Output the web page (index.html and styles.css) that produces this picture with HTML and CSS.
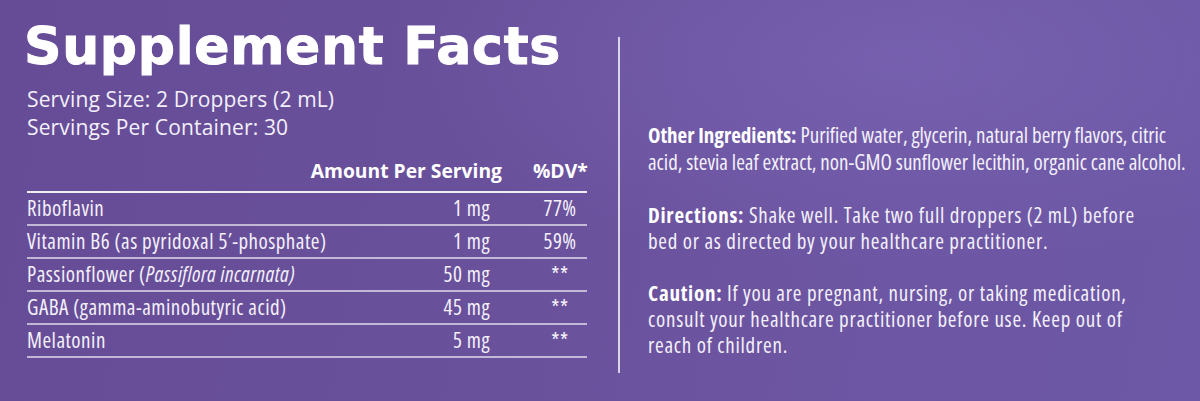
FILE: index.html
```html
<!DOCTYPE html>
<html lang="en">
<head>
<meta charset="utf-8">
<title>Supplement Facts</title>
<link rel="stylesheet" href="styles.css">
</head>
<body>
<main class="panel">
  <section class="facts">
    <h1 class="title">Supplement Facts</h1>
    <p class="serving">Serving Size: 2 Droppers (2 mL)</p>
    <p class="serving">Servings Per Container: 30</p>
    <div class="table">
      <div class="row head">
        <span class="name"></span>
        <span class="amt">Amount Per Serving</span>
        <span class="dv">%DV*</span>
      </div>
      <div class="row">
        <span class="name">Riboflavin</span>
        <span class="amt">1 mg</span>
        <span class="dv">77%</span>
      </div>
      <div class="row">
        <span class="name">Vitamin B6 (as pyridoxal 5′-phosphate)</span>
        <span class="amt">1 mg</span>
        <span class="dv">59%</span>
      </div>
      <div class="row">
        <span class="name">Passionflower (<i>Passiflora incarnata)</i></span>
        <span class="amt">50 mg</span>
        <span class="dv">**</span>
      </div>
      <div class="row">
        <span class="name">GABA (gamma-aminobutyric acid)</span>
        <span class="amt">45 mg</span>
        <span class="dv">**</span>
      </div>
      <div class="row">
        <span class="name">Melatonin</span>
        <span class="amt">5 mg</span>
        <span class="dv">**</span>
      </div>
    </div>
  </section>
  <div class="divider"></div>
  <section class="info">
    <p class="first"><b>Other Ingredients:</b> Purified water, glycerin, natural berry flavors, citric<br>acid, stevia leaf extract, non-GMO sunflower lecithin, organic cane alcohol.</p>
    <p class="wide"><b>Directions:</b> Shake well. Take two full droppers (2 mL) before<br>bed or as directed by your healthcare practitioner.</p>
    <p class="wide"><b>Caution:</b> If you are pregnant, nursing, or taking medication,<br>consult your healthcare practitioner before use. Keep out of<br>reach of children.</p>
  </section>
</main>
</body>
</html>
```
FILE: styles.css
```css
html, body {
  margin: 0;
  padding: 0;
}
body {
  width: 1200px;
  height: 401px;
  overflow: hidden;
  background:
    radial-gradient(ellipse 700px 300px at 900px 60px, rgba(125, 105, 185, 0.55), rgba(125, 105, 185, 0) 70%),
    linear-gradient(100deg, #664c97 0%, #6a519c 45%, #6d56a3 75%, #6c58a6 100%);
  color: #fff;
  font-family: "Open Sans", "Liberation Sans", sans-serif;
}
.panel {
  display: flex;
  align-items: flex-start;
  height: 401px;
}
.facts {
  width: 560px;
  margin-left: 27px;
  padding-top: 16px;
}
.title {
  margin: 0 0 9px -3px;
  font-family: "DejaVu Sans", "Liberation Sans", sans-serif;
  font-weight: 700;
  font-size: 52px;
  line-height: 60px;
  letter-spacing: 0.7px;
  -webkit-text-stroke: 1px #fff;
  color: #fff;
}
.serving {
  margin: 0;
  font-size: 21px;
  line-height: 28px;
  letter-spacing: 0.15px;
  color: #f3f0f9;
}
.table {
  margin-top: 16px;
}
.row {
  display: grid;
  grid-template-columns: 1fr auto 54px;
  column-gap: 31px;
  align-items: end;
  box-sizing: border-box;
  height: 33px;
  border-bottom: 2px solid rgba(255, 255, 255, 0.6);
  font-size: 21px;
  font-stretch: 75%;
  letter-spacing: 0.5px;
  line-height: 24px;
  color: #f3f0f9;
}
.row > span {
  padding-bottom: 4px;
}
.row .amt {
  text-align: right;
  padding-right: 12px;
}
.row .dv {
  text-align: center;
}
.row.head {
  height: 36px;
  border-bottom: 2px solid rgba(255, 255, 255, 0.9);
  font-weight: 700;
  font-size: 19.3px;
  font-stretch: normal;
  letter-spacing: 0;
  color: #fff;
}
.row.head > span {
  padding-bottom: 8px;
}
.row.head .amt {
  padding-right: 0;
}
.row.head .dv {
  text-align: right;
}
.divider {
  width: 2px;
  height: 336px;
  margin: 37px 28px 0 31px;
  background: rgba(255, 255, 255, 0.75);
}
.info {
  width: 545px;
  padding-top: 122px;
  white-space: nowrap;
}
.info p {
  margin: 0 0 26px;
  font-size: 21px;
  font-stretch: 75%;
  line-height: 26px;
  color: #f3f0f9;
}
.info p.first {
  line-height: 27px;
}
.info p.wide {
  letter-spacing: 0.75px;
}
.info b {
  font-weight: 700;
  color: #fff;
}
```
